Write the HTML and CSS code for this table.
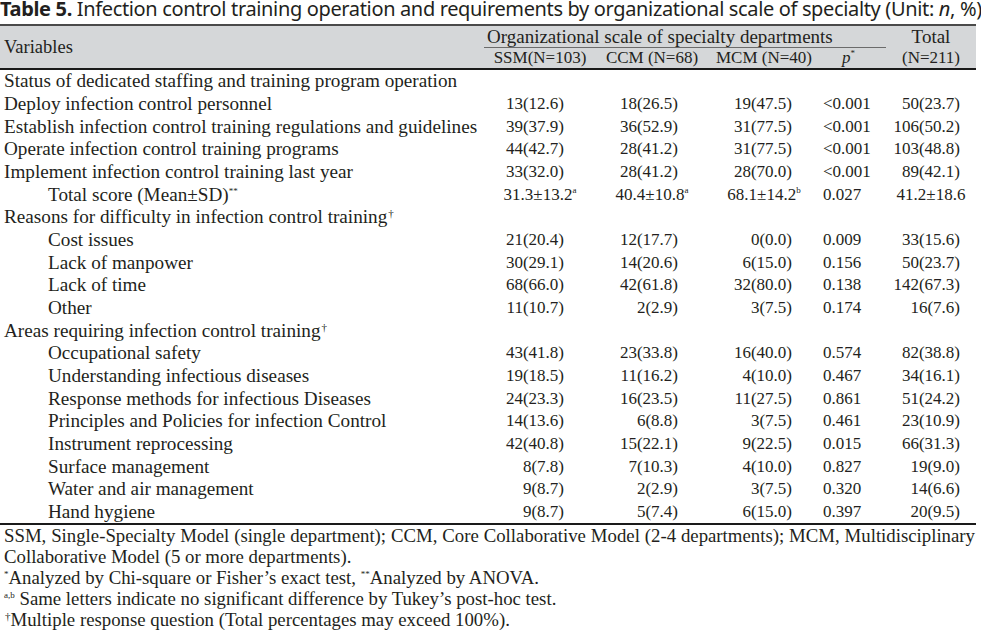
FILE: index.html
```html
<!DOCTYPE html>
<html lang="en">
<head>
<meta charset="utf-8">
<title>Table 5</title>
<link rel="stylesheet" href="styles.css">
</head>
<body>
<div class="caption"><b>Table 5.</b> Infection control training operation and requirements by organizational scale of specialty (Unit: <i>n</i>, %)</div>
<table class="tbl">
  <colgroup>
    <col class="c-var"><col class="c-ssm"><col class="c-ccm"><col class="c-mcm"><col class="c-p"><col class="c-tot">
  </colgroup>
  <thead>
    <tr class="h1">
      <th rowspan="2" class="hv">Variables</th>
      <th colspan="4" class="hg">Organizational scale of specialty departments</th>
      <th class="ht"><span class="lt">Total</span></th>
    </tr>
    <tr class="h2">
      <th>SSM(N=103)</th>
      <th>CCM (N=68)</th>
      <th>MCM (N=40)</th>
      <th class="hp"><i>p</i><sup>*</sup></th>
      <th class="ht2">(N=211)</th>
    </tr>
  </thead>
  <tbody>
    <tr><td class="v">Status of dedicated staffing and training program operation</td><td class="n s"></td><td class="n c"></td><td class="n m"></td><td class="p"></td><td class="n t"></td></tr>
    <tr><td class="v">Deploy infection control personnel</td><td class="n s">13(12.6)</td><td class="n c">18(26.5)</td><td class="n m">19(47.5)</td><td class="p">&lt;0.001</td><td class="n t">50(23.7)</td></tr>
    <tr><td class="v">Establish infection control training regulations and guidelines</td><td class="n s">39(37.9)</td><td class="n c">36(52.9)</td><td class="n m">31(77.5)</td><td class="p">&lt;0.001</td><td class="n t">106(50.2)</td></tr>
    <tr><td class="v">Operate infection control training programs</td><td class="n s">44(42.7)</td><td class="n c">28(41.2)</td><td class="n m">31(77.5)</td><td class="p">&lt;0.001</td><td class="n t">103(48.8)</td></tr>
    <tr><td class="v">Implement infection control training last year</td><td class="n s">33(32.0)</td><td class="n c">28(41.2)</td><td class="n m">28(70.0)</td><td class="p">&lt;0.001</td><td class="n t">89(42.1)</td></tr>
    <tr class="score"><td class="v in">Total score (Mean±SD)<sup>**</sup></td><td class="n s">31.3±13.2<sup>a</sup></td><td class="n c">40.4±10.8<sup>a</sup></td><td class="n m">68.1±14.2<sup>b</sup></td><td class="p">0.027</td><td class="n t">41.2±18.6</td></tr>
    <tr><td class="v">Reasons for difficulty in infection control training<sup class="dg">†</sup></td><td class="n s"></td><td class="n c"></td><td class="n m"></td><td class="p"></td><td class="n t"></td></tr>
    <tr><td class="v in">Cost issues</td><td class="n s">21(20.4)</td><td class="n c">12(17.7)</td><td class="n m">0(0.0)</td><td class="p">0.009</td><td class="n t">33(15.6)</td></tr>
    <tr><td class="v in">Lack of manpower</td><td class="n s">30(29.1)</td><td class="n c">14(20.6)</td><td class="n m">6(15.0)</td><td class="p">0.156</td><td class="n t">50(23.7)</td></tr>
    <tr><td class="v in">Lack of time</td><td class="n s">68(66.0)</td><td class="n c">42(61.8)</td><td class="n m">32(80.0)</td><td class="p">0.138</td><td class="n t">142(67.3)</td></tr>
    <tr><td class="v in">Other</td><td class="n s">11(10.7)</td><td class="n c">2(2.9)</td><td class="n m">3(7.5)</td><td class="p">0.174</td><td class="n t">16(7.6)</td></tr>
    <tr><td class="v">Areas requiring infection control training<sup class="dg">†</sup></td><td class="n s"></td><td class="n c"></td><td class="n m"></td><td class="p"></td><td class="n t"></td></tr>
    <tr><td class="v in">Occupational safety</td><td class="n s">43(41.8)</td><td class="n c">23(33.8)</td><td class="n m">16(40.0)</td><td class="p">0.574</td><td class="n t">82(38.8)</td></tr>
    <tr><td class="v in">Understanding infectious diseases</td><td class="n s">19(18.5)</td><td class="n c">11(16.2)</td><td class="n m">4(10.0)</td><td class="p">0.467</td><td class="n t">34(16.1)</td></tr>
    <tr><td class="v in">Response methods for infectious Diseases</td><td class="n s">24(23.3)</td><td class="n c">16(23.5)</td><td class="n m">11(27.5)</td><td class="p">0.861</td><td class="n t">51(24.2)</td></tr>
    <tr><td class="v in">Principles and Policies for infection Control</td><td class="n s">14(13.6)</td><td class="n c">6(8.8)</td><td class="n m">3(7.5)</td><td class="p">0.461</td><td class="n t">23(10.9)</td></tr>
    <tr><td class="v in">Instrument reprocessing</td><td class="n s">42(40.8)</td><td class="n c">15(22.1)</td><td class="n m">9(22.5)</td><td class="p">0.015</td><td class="n t">66(31.3)</td></tr>
    <tr><td class="v in">Surface management</td><td class="n s">8(7.8)</td><td class="n c">7(10.3)</td><td class="n m">4(10.0)</td><td class="p">0.827</td><td class="n t">19(9.0)</td></tr>
    <tr><td class="v in">Water and air management</td><td class="n s">9(8.7)</td><td class="n c">2(2.9)</td><td class="n m">3(7.5)</td><td class="p">0.320</td><td class="n t">14(6.6)</td></tr>
    <tr class="last"><td class="v in">Hand hygiene</td><td class="n s">9(8.7)</td><td class="n c">5(7.4)</td><td class="n m">6(15.0)</td><td class="p">0.397</td><td class="n t">20(9.5)</td></tr>
  </tbody>
</table>
<div class="notes">
  <p class="just">SSM, Single-Specialty Model (single department); CCM, Core Collaborative Model (2-4 departments); MCM, Multidisciplinary Collaborative Model (5 or more departments).</p>
  <p><sup>*</sup>Analyzed by Chi-square or Fisher’s exact test, <sup>**</sup>Analyzed by ANOVA.</p>
  <p><sup>a,b</sup> Same letters indicate no significant difference by Tukey’s post-hoc test.</p>
  <p><sup class="dg">†</sup>Multiple response question (Total percentages may exceed 100%).</p>
</div>
</body>
</html>
```

FILE: styles.css
```css
html, body {
  margin: 0;
  padding: 0;
  background: #ffffff;
}
body {
  width: 981px;
  color: #231f20;
  font-family: "Liberation Serif", "Times New Roman", serif;
}
.caption {
  font-family: "Noto Sans", "Open Sans", sans-serif;
  font-size: 20px;
  line-height: 18px;
  height: 24px;
  white-space: nowrap;
  letter-spacing: -0.35px;
  color: #231f20;
}
.caption b { font-weight: 700; }
.tbl {
  width: 976px;
  border-collapse: collapse;
  table-layout: fixed;
  font-size: 17px;
}
.c-var { width: 484px; }
.c-ssm { width: 112px; }
.c-ccm { width: 112px; }
.c-mcm { width: 112px; }
.c-p { width: 66px; }
.c-tot { width: 90px; }

.tbl thead tr { background: #d5d7d9; }
.tbl th {
  font-weight: normal;
  padding: 0;
  line-height: 20px;
  text-align: center;
  vertical-align: middle;
}
.h1 th { border-top: 2px solid #4a4a4a; height: 21px; vertical-align: bottom; }
.h2 th { border-bottom: 2px solid #1a1a1a; height: 20px; vertical-align: top; }
.hv {
  text-align: left !important;
  padding-left: 4px !important;
  border-bottom: 2px solid #1a1a1a;
  font-size: 18.5px;
  vertical-align: middle !important;
}
.hg {
  text-align: left !important;
  padding-left: 3px !important;
  font-size: 19px;
}
.h1 .hg { border-bottom: 1px solid #6b6b6b; }
.lt { font-size: 19px; }
.hp { text-align: left !important; padding-left: 22px !important; }
.tbl sup, .notes sup {
  font-size: 9px;
  line-height: 0;
  vertical-align: 7px;
}
.tbl sup.dg, .notes sup.dg {
  font-size: 11px;
  vertical-align: 6px;
  padding-left: 1px;
}
.tbl td {
  padding: 0;
  height: 22.68px;
  line-height: 20px;
  white-space: nowrap;
  vertical-align: middle;
}
.v { padding-left: 4px !important; font-size: 19.2px; }
.v.in { padding-left: 48px !important; }
.n { text-align: right; }
.n.s { padding-right: 32px; }
.n.c { padding-right: 30px; }
.n.m { padding-right: 28px; }
.n.t { padding-right: 16px; }
.p { padding-left: 3px !important; }
.score .n { text-align: center; padding-right: 0; }
.last td { border-bottom: 2px solid #1a1a1a; }

.notes {
  width: 975px;
  font-size: 18.8px;
  line-height: 21px;
}
.notes p { margin: 0; padding-left: 4px; }
.notes .just { text-align: justify; }
```
